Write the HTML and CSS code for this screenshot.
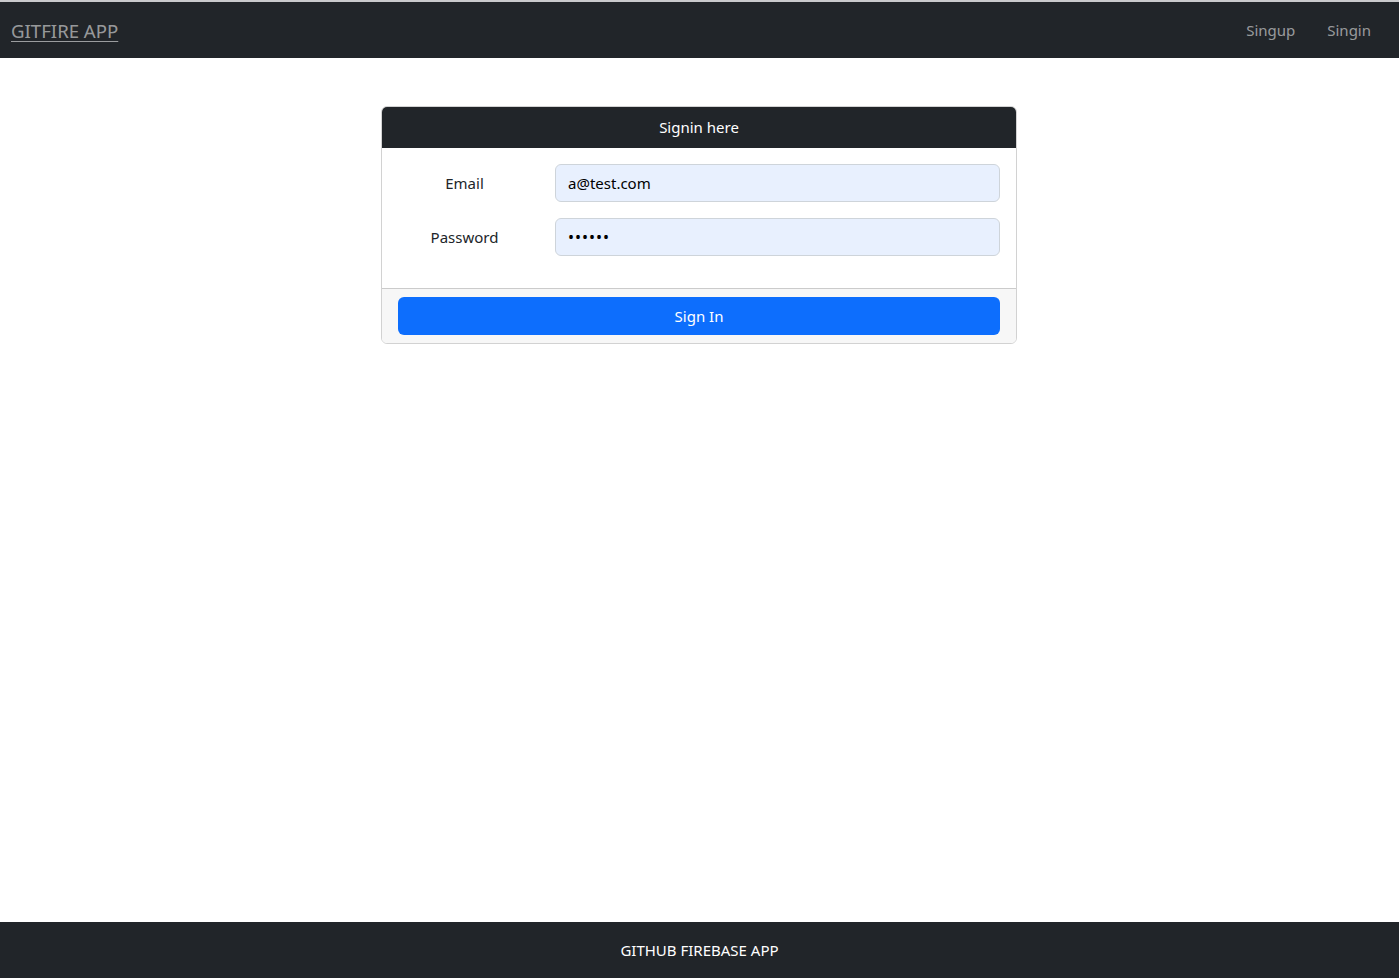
FILE: index.html
```html
<!DOCTYPE html>
<html>
<head>
<meta charset="utf-8">
<link rel="stylesheet" href="styles.css">
</head>
<body>
<div class="page">
  <nav class="navbar">
    <a class="brand" href="#">GITFIRE APP</a>
    <div class="nav-links">
      <a href="#">Singup</a>
      <a href="#">Singin</a>
    </div>
  </nav>
  <main class="main">
    <div class="card">
      <div class="card-header">Signin here</div>
      <div class="card-body">
        <div class="form-row">
          <label>Email</label>
          <div class="input">a@test.com</div>
        </div>
        <div class="form-row">
          <label>Password</label>
          <div class="input pw">••••••</div>
        </div>
      </div>
      <div class="card-footer">
        <button class="btn">Sign In</button>
      </div>
    </div>
  </main>
  <footer class="footer">GITHUB FIREBASE APP</footer>
</div>
</body>
</html>
```

FILE: styles.css
```css
* { box-sizing: border-box; }
html, body { margin: 0; padding: 0; }
body {
  font-family: "Noto Sans", "Open Sans", sans-serif;
  font-size: 15px;
  color: #212529;
  background: #fff;
}
.page {
  height: 978px;
  display: flex;
  flex-direction: column;
  border-top: 2px solid #c9cacc;
}
.navbar {
  height: 56px;
  background: #212529;
  display: flex;
  align-items: center;
  justify-content: space-between;
  padding: 0 12px 0 11px;
}
.brand {
  color: rgba(255,255,255,.55);
  font-size: 18.6px;
  text-decoration: underline;
  text-underline-offset: 3px;
}
.nav-links { display: flex; }
.nav-links a {
  color: rgba(255,255,255,.55);
  text-decoration: none;
  padding: 8px 16px;
}
.main {
  flex: 1;
  display: flex;
  justify-content: center;
  padding-top: 48px;
  padding-right: 1px;
}
.card {
  width: 636px;
  align-self: flex-start;
  border: 1px solid rgba(0,0,0,.175);
  border-radius: 6px;
  overflow: hidden;
}
.card-header {
  background: #212529;
  color: #fff;
  height: 42px;
  display: flex;
  align-items: center;
  justify-content: center;
  margin: -1px -1px 0;
}
.card-body {
  padding: 16px 16px 32px;
  display: flex;
  flex-direction: column;
  gap: 16px;
}
.form-row {
  display: grid;
  grid-template-columns: 133px 445px;
  column-gap: 24px;
  align-items: center;
}
.form-row label { text-align: center; }
.input {
  height: 38px;
  border: 1px solid #ced4da;
  border-radius: 6px;
  background: #e8f0fe;
  padding: 0 12px;
  display: flex;
  align-items: center;
  color: #000;
}
.input.pw { font-size: 16px; letter-spacing: 1px; }
.card-footer {
  border-top: 1px solid rgba(0,0,0,.175);
  background: #f7f7f7;
  padding: 8px 16px;
}
.btn {
  width: 100%;
  height: 38px;
  background: #0d6efd;
  color: #fff;
  border: 0;
  border-radius: 6px;
  font: inherit;
}
.footer {
  height: 56px;
  background: #212529;
  color: #fff;
  display: flex;
  align-items: center;
  justify-content: center;
}
```
